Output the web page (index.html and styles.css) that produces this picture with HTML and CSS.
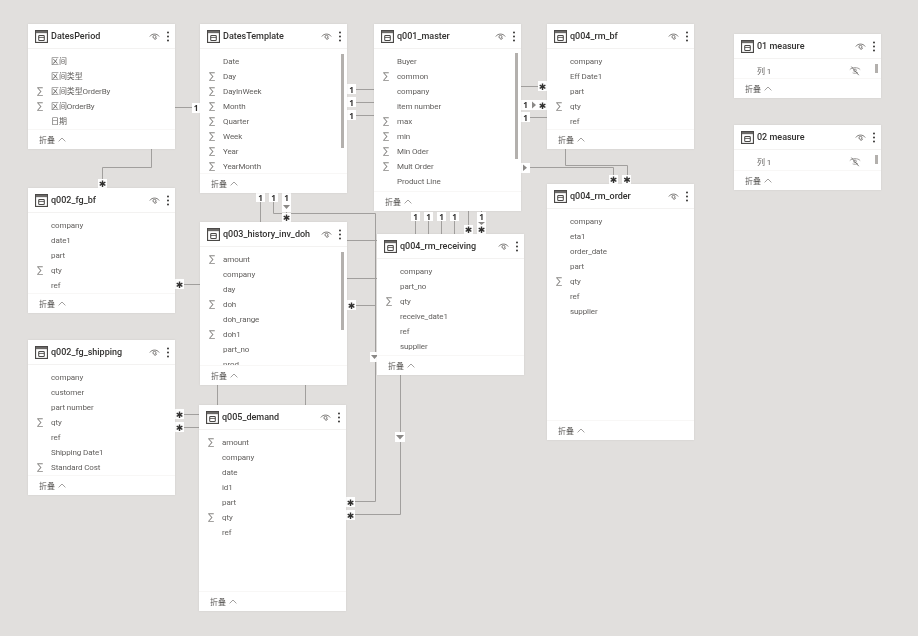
FILE: index.html
```html
<!DOCTYPE html>
<html lang="zh">
<head>
<meta charset="utf-8">
<title>Model view</title>
<link rel="stylesheet" href="styles.css">
</head>
<body>
<svg class="defs" width="0" height="0" aria-hidden="true">
  <symbol id="i-table" viewBox="0 0 14 14"><rect x="0.6" y="0.6" width="12.8" height="12.8" fill="#fff" stroke="#4a4846" stroke-width="1.2"/><rect x="1" y="1" width="12" height="2.4" fill="#6b6967"/><rect x="4" y="5.8" width="6" height="5.6" rx="0.8" fill="none" stroke="#4a4846" stroke-width="1.1"/><path d="M4 8h6" stroke="#4a4846" stroke-width="0.9"/></symbol>
  <symbol id="i-eye" viewBox="0 0 12 10"><path d="M0.8 5C3 1.4 9 1.4 11.2 5" fill="none" stroke="#605e5c" stroke-width="0.9"/><path d="M8.6 6.6C8 7.8 7 8.3 6 8.3" fill="none" stroke="#605e5c" stroke-width="0.8"/><circle cx="6" cy="5.4" r="1.7" fill="none" stroke="#605e5c" stroke-width="0.9"/></symbol>
  <symbol id="i-eye-off" viewBox="0 0 12 10"><path d="M0.8 3.6C3 1 9 1 11.2 3.6" fill="none" stroke="#8a8886" stroke-width="0.8"/><path d="M3.6 6.8C5 7.6 7.4 7.6 9 6.4" fill="none" stroke="#8a8886" stroke-width="0.7"/><circle cx="6" cy="4.4" r="1.4" fill="none" stroke="#8a8886" stroke-width="0.8"/><path d="M2.4 0.6L9.8 9.2" stroke="#605e5c" stroke-width="0.8"/></symbol>
  <symbol id="i-more" viewBox="0 0 4 12"><circle cx="2" cy="1.6" r="1.1" fill="#3b3a39"/><circle cx="2" cy="6" r="1.1" fill="#3b3a39"/><circle cx="2" cy="10.4" r="1.1" fill="#3b3a39"/></symbol>
  <symbol id="i-up" viewBox="0 0 8 5"><path d="M0.6 4.4L4 1L7.4 4.4" fill="none" stroke="#8a8886" stroke-width="0.8"/></symbol>
</svg>

<main class="canvas">
  <svg class="links" width="918" height="636" viewBox="0 0 918 636">
    <g class="wires">
      <path d="M175 107.500H192"/>
      <path d="M151.500 149V167.500H102.500V180"/>
      <path d="M260.500 202V222"/>
      <path d="M273.500 202V213.500H375.500V501.500H355"/>
      <path d="M286.500 202V213"/>
      <path d="M347 240.500H377"/>
      <path d="M347 278.500H377"/>
      <path d="M347 305.500H375"/>
      <path d="M347 89.500H374"/>
      <path d="M347 102.500H374"/>
      <path d="M347 115.500H374"/>
      <path d="M415.500 221V234M428.500 221V234M441.500 221V234M454.500 221V234"/>
      <path d="M468.500 211V226"/>
      <path d="M481.500 211V226"/>
      <path d="M521 86.500H540"/>
      <path d="M521 104.500H540"/>
      <path d="M530 117.500H547"/>
      <path d="M565.500 149V165.500H627.500V176"/>
      <path d="M530 167.500H613.500V176"/>
      <path d="M175 284.500H200"/>
      <path d="M175 414.500H199"/>
      <path d="M175 427.500H199"/>
      <path d="M217.500 385V405"/>
      <path d="M305.500 385V405"/>
      <path d="M400.500 375V514.500H355"/>
    </g>
    <g class="badges">
      <rect x="192" y="103" width="8" height="10"/>
      <rect x="256" y="193" width="9" height="9"/><rect x="269" y="193" width="9" height="9"/><rect x="282" y="193" width="9" height="9"/>
      <rect x="282" y="202" width="9" height="10"/><rect x="282" y="213" width="9" height="9"/>
      <rect x="347" y="84" width="9" height="10"/><rect x="347" y="97" width="9" height="10"/><rect x="347" y="110" width="9" height="10"/>
      <rect x="411" y="212" width="9" height="9"/><rect x="424" y="212" width="9" height="9"/><rect x="437" y="212" width="9" height="9"/><rect x="450" y="212" width="9" height="9"/>
      <rect x="464" y="225" width="9" height="9"/><rect x="477" y="212" width="9" height="9"/><rect x="477" y="221" width="9" height="4"/><rect x="477" y="225" width="9" height="9"/>
      <rect x="538" y="81" width="9" height="10"/><rect x="521" y="100" width="9" height="10"/><rect x="530" y="100" width="8" height="10"/><rect x="538" y="100" width="9" height="10"/>
      <rect x="521" y="112" width="9" height="10"/><rect x="521" y="163" width="9" height="10"/>
      <rect x="609" y="175" width="9" height="9"/><rect x="622" y="175" width="9" height="9"/>
      <rect x="98" y="179" width="9" height="9"/>
      <rect x="175" y="279" width="9" height="10"/><rect x="347" y="300" width="9" height="10"/>
      <rect x="175" y="409" width="9" height="10"/><rect x="175" y="422" width="9" height="10"/>
      <rect x="346" y="497" width="9" height="10"/><rect x="346" y="510" width="9" height="10"/>
      <rect x="370" y="352" width="9" height="10"/><rect x="395" y="432" width="10" height="10"/>
    </g>
    <g class="ones">
      <text x="196" y="111">1</text><text x="260.500" y="200.500">1</text><text x="273.500" y="200.500">1</text><text x="286.500" y="200.500">1</text>
      <text x="351.500" y="92.500">1</text><text x="351.500" y="105.500">1</text><text x="351.500" y="118.500">1</text>
      <text x="415.500" y="219.500">1</text><text x="428.500" y="219.500">1</text><text x="441.500" y="219.500">1</text><text x="454.500" y="219.500">1</text><text x="481.500" y="219.500">1</text>
      <text x="525.500" y="108">1</text><text x="525.500" y="120.500">1</text>
    </g>
    <g class="stars">
      <text x="286.500" y="221">✱</text><text x="468.500" y="233">✱</text><text x="481.500" y="233">✱</text>
      <text x="542.500" y="90">✱</text><text x="542.500" y="109">✱</text>
      <text x="613.500" y="183">✱</text><text x="627" y="183">✱</text><text x="102.500" y="187">✱</text>
      <text x="179.500" y="288">✱</text><text x="351.500" y="309">✱</text>
      <text x="179.500" y="418">✱</text><text x="179.500" y="431">✱</text>
      <text x="350.500" y="506">✱</text><text x="350.500" y="519">✱</text>
    </g>
    <g class="arrows">
      <path d="M283 205H290L286.500 209Z"/>
      <path d="M478 222H485L481.500 225Z"/>
      <path d="M532 101.500V108.500L536 105Z"/>
      <path d="M523 164.500V171L527 167.700Z"/>
      <path d="M371 355H378L374.500 359Z"/>
      <path d="M396 435H404L400 439.500Z"/>
    </g>
  </svg>

  <section class="node n-period">
    <header class="node-head"><svg class="ic-table"><use href="#i-table"/></svg><h2>DatesPeriod</h2><svg class="ic-eye"><use href="#i-eye"/></svg><svg class="ic-more"><use href="#i-more"/></svg></header>
    <ul class="fields"><li>区间</li><li>区间类型</li><li class="sum">区间类型OrderBy</li><li class="sum">区间OrderBy</li><li>日期</li></ul>
    <footer class="node-foot">折叠<svg class="ic-up"><use href="#i-up"/></svg></footer>
  </section>

  <section class="node n-template">
    <header class="node-head"><svg class="ic-table"><use href="#i-table"/></svg><h2>DatesTemplate</h2><svg class="ic-eye"><use href="#i-eye"/></svg><svg class="ic-more"><use href="#i-more"/></svg></header>
    <ul class="fields"><li>Date</li><li class="sum">Day</li><li class="sum">DayInWeek</li><li class="sum">Month</li><li class="sum">Quarter</li><li class="sum">Week</li><li class="sum">Year</li><li class="sum">YearMonth</li></ul>
    <i class="thumb t-template"></i>
    <footer class="node-foot">折叠<svg class="ic-up"><use href="#i-up"/></svg></footer>
  </section>

  <section class="node n-master">
    <header class="node-head"><svg class="ic-table"><use href="#i-table"/></svg><h2>q001_master</h2><svg class="ic-eye"><use href="#i-eye"/></svg><svg class="ic-more"><use href="#i-more"/></svg></header>
    <ul class="fields"><li>Buyer</li><li class="sum">common</li><li>company</li><li>item number</li><li class="sum">max</li><li class="sum">min</li><li class="sum">Min Oder</li><li class="sum">Mult Order</li><li>Product Line</li></ul>
    <i class="thumb t-master"></i>
    <footer class="node-foot">折叠<svg class="ic-up"><use href="#i-up"/></svg></footer>
  </section>

  <section class="node n-rmbf">
    <header class="node-head"><svg class="ic-table"><use href="#i-table"/></svg><h2>q004_rm_bf</h2><svg class="ic-eye"><use href="#i-eye"/></svg><svg class="ic-more"><use href="#i-more"/></svg></header>
    <ul class="fields"><li>company</li><li>Eff Date1</li><li>part</li><li class="sum">qty</li><li>ref</li></ul>
    <footer class="node-foot">折叠<svg class="ic-up"><use href="#i-up"/></svg></footer>
  </section>

  <section class="node n-m1">
    <header class="node-head"><svg class="ic-table"><use href="#i-table"/></svg><h2>01 measure</h2><svg class="ic-eye"><use href="#i-eye"/></svg><svg class="ic-more"><use href="#i-more"/></svg></header>
    <ul class="fields"><li>列 1<svg class="ic-off"><use href="#i-eye-off"/></svg></li></ul>
    <i class="thumb t-measure"></i>
    <footer class="node-foot">折叠<svg class="ic-up"><use href="#i-up"/></svg></footer>
  </section>

  <section class="node n-m2">
    <header class="node-head"><svg class="ic-table"><use href="#i-table"/></svg><h2>02 measure</h2><svg class="ic-eye"><use href="#i-eye"/></svg><svg class="ic-more"><use href="#i-more"/></svg></header>
    <ul class="fields"><li>列 1<svg class="ic-off"><use href="#i-eye-off"/></svg></li></ul>
    <i class="thumb t-measure"></i>
    <footer class="node-foot">折叠<svg class="ic-up"><use href="#i-up"/></svg></footer>
  </section>

  <section class="node n-fgbf">
    <header class="node-head"><svg class="ic-table"><use href="#i-table"/></svg><h2>q002_fg_bf</h2><svg class="ic-eye"><use href="#i-eye"/></svg><svg class="ic-more"><use href="#i-more"/></svg></header>
    <ul class="fields"><li>company</li><li>date1</li><li>part</li><li class="sum">qty</li><li>ref</li></ul>
    <footer class="node-foot">折叠<svg class="ic-up"><use href="#i-up"/></svg></footer>
  </section>

  <section class="node n-hist">
    <header class="node-head"><svg class="ic-table"><use href="#i-table"/></svg><h2>q003_history_inv_doh</h2><svg class="ic-eye"><use href="#i-eye"/></svg><svg class="ic-more"><use href="#i-more"/></svg></header>
    <ul class="fields"><li class="sum">amount</li><li>company</li><li>day</li><li class="sum">doh</li><li>doh_range</li><li class="sum">doh1</li><li>part_no</li><li>prod</li></ul>
    <i class="thumb t-hist"></i>
    <footer class="node-foot">折叠<svg class="ic-up"><use href="#i-up"/></svg></footer>
  </section>

  <section class="node n-recv">
    <header class="node-head"><svg class="ic-table"><use href="#i-table"/></svg><h2>q004_rm_receiving</h2><svg class="ic-eye"><use href="#i-eye"/></svg><svg class="ic-more"><use href="#i-more"/></svg></header>
    <ul class="fields"><li>company</li><li>part_no</li><li class="sum">qty</li><li>receive_date1</li><li>ref</li><li>supplier</li></ul>
    <footer class="node-foot">折叠<svg class="ic-up"><use href="#i-up"/></svg></footer>
  </section>

  <section class="node n-order">
    <header class="node-head"><svg class="ic-table"><use href="#i-table"/></svg><h2>q004_rm_order</h2><svg class="ic-eye"><use href="#i-eye"/></svg><svg class="ic-more"><use href="#i-more"/></svg></header>
    <ul class="fields"><li>company</li><li>eta1</li><li>order_date</li><li>part</li><li class="sum">qty</li><li>ref</li><li>supplier</li></ul>
    <footer class="node-foot">折叠<svg class="ic-up"><use href="#i-up"/></svg></footer>
  </section>

  <section class="node n-ship">
    <header class="node-head"><svg class="ic-table"><use href="#i-table"/></svg><h2>q002_fg_shipping</h2><svg class="ic-eye"><use href="#i-eye"/></svg><svg class="ic-more"><use href="#i-more"/></svg></header>
    <ul class="fields"><li>company</li><li>customer</li><li>part number</li><li class="sum">qty</li><li>ref</li><li>Shipping Date1</li><li class="sum">Standard Cost</li></ul>
    <footer class="node-foot">折叠<svg class="ic-up"><use href="#i-up"/></svg></footer>
  </section>

  <section class="node n-demand">
    <header class="node-head"><svg class="ic-table"><use href="#i-table"/></svg><h2>q005_demand</h2><svg class="ic-eye"><use href="#i-eye"/></svg><svg class="ic-more"><use href="#i-more"/></svg></header>
    <ul class="fields"><li class="sum">amount</li><li>company</li><li>date</li><li>id1</li><li>part</li><li class="sum">qty</li><li>ref</li></ul>
    <footer class="node-foot">折叠<svg class="ic-up"><use href="#i-up"/></svg></footer>
  </section>
</main>
</body>
</html>
```
FILE: styles.css
```css
* { box-sizing: border-box; }
html, body { margin: 0; padding: 0; }
body { background: #e1dfdd; overflow: hidden; font-family: Roboto, "Noto Sans CJK SC", sans-serif; }
.defs { position: absolute; }
.canvas { position: relative; width: 918px; height: 636px; filter: blur(0.3px); }
.links { position: absolute; left: 0; top: 0; }
.wires path { fill: none; stroke: #a19f9d; stroke-width: 1; }
.badges rect { fill: #fff; }
.ones text { font: 700 8px "Open Sans", sans-serif; fill: #323130; text-anchor: middle; }
.stars text { font: 400 9px "DejaVu Sans", sans-serif; fill: #323130; text-anchor: middle; }
.arrows path { fill: #8a8886; }

.node { position: absolute; display: flex; flex-direction: column; width: 147px; background: #fff; box-shadow: 0 0 2px rgba(0,0,0,.08); }
.n-period { left: 28px; top: 24px; height: 125px; }
.n-template { left: 200px; top: 24px; height: 169px; }
.n-master { left: 374px; top: 24px; height: 187px; }
.n-rmbf { left: 547px; top: 24px; height: 125px; }
.n-m1 { left: 734px; top: 34px; height: 64px; }
.n-m2 { left: 734px; top: 125px; height: 65px; }
.n-fgbf { left: 28px; top: 188px; height: 125px; }
.n-hist { left: 200px; top: 222px; height: 163px; }
.n-recv { left: 377px; top: 234px; height: 141px; }
.n-order { left: 547px; top: 184px; height: 256px; }
.n-ship { left: 28px; top: 340px; height: 155px; }
.n-demand { left: 199px; top: 405px; height: 206px; }

.node-head { flex: none; display: flex; align-items: center; height: 25px; padding: 0 5px 0 7px; border-bottom: 1px solid #f3f2f1; }
.node-head h2 { flex: 1; min-width: 0; margin: 0 0 0 3px; font-size: 9px; font-weight: 500; color: #323130; white-space: nowrap; }
.ic-table { flex: none; width: 13px; height: 13px; }
.ic-eye { flex: none; width: 11px; height: 9px; margin-right: 6px; }
.ic-more { flex: none; width: 4px; height: 11px; }

.fields { flex: 1; min-height: 0; overflow: hidden; list-style: none; margin: 0; padding: 5px 0 0 23px; font-size: 8px; letter-spacing: -0.1px; line-height: 15px; color: #605e5c; }
.fields li { position: relative; height: 15px; white-space: nowrap; }
.fields .sum::before { content: "∑"; position: absolute; left: -14px; top: 0; font: 9px/15px "DejaVu Sans", sans-serif; color: #8a8886; }
.ic-off { position: absolute; left: 92px; top: 2px; width: 12px; height: 10px; }

.thumb { position: absolute; right: 3px; width: 3px; background: #b3b0ad; }
.t-template { top: 30px; height: 94px; }
.t-master { top: 29px; height: 106px; }
.t-hist { top: 30px; height: 78px; }
.t-measure { top: 30px; height: 9px; }

.node-foot { flex: none; display: flex; align-items: center; gap: 3px; height: 20px; padding: 0 0 1px 11px; border-top: 1px solid #f8f7f6; font-size: 8px; color: #605e5c; }
.ic-up { width: 8px; height: 5px; }
```
